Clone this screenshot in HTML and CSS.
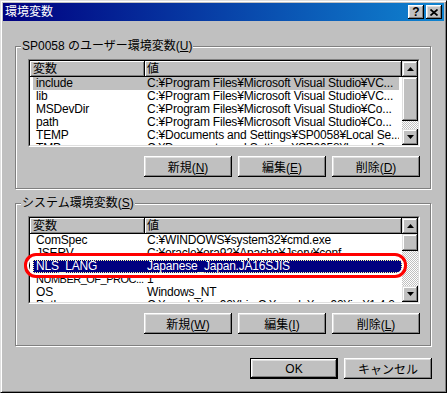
FILE: index.html
```html
<!DOCTYPE html>
<html lang="ja">
<head>
    <meta charset="UTF-8">
    <title>環境変数</title>
    <link rel="stylesheet" href="styles.css">
</head>
<body>
    <div class="window">
        <div class="titlebar">
            <span class="title">環境変数</span>
            <div class="title-buttons">
                <span class="tbtn help">?</span>
                <span class="tbtn close">
                    <svg width="8" height="7" viewBox="0 0 8 7"><path d="M0.5 0.5L7.5 6.5M7.5 0.5L0.5 6.5" stroke="#000" stroke-width="1.7"/></svg>
                </span>
            </div>
        </div>

        <div class="content">
            <!-- ユーザー環境変数 -->
            <div class="group">
                <div class="group-label">SP0058 のユーザー環境変数(<u>U</u>)</div>
                <div class="listview">
                    <div class="listview-inner">
                        <div class="list-main">
                            <div class="list-header">
                                <div class="hcell name">変数</div>
                                <div class="hcell value">値</div>
                            </div>
                            <div class="row user-row inactive">
                                <div class="cell name">include</div>
                                <div class="cell value">C:¥Program Files¥Microsoft Visual Studio¥VC...</div>
                            </div>
                            <div class="row user-row">
                                <div class="cell name">lib</div>
                                <div class="cell value">C:¥Program Files¥Microsoft Visual Studio¥VC...</div>
                            </div>
                            <div class="row user-row">
                                <div class="cell name">MSDevDir</div>
                                <div class="cell value">C:¥Program Files¥Microsoft Visual Studio¥Co...</div>
                            </div>
                            <div class="row user-row">
                                <div class="cell name">path</div>
                                <div class="cell value">C:¥Program Files¥Microsoft Visual Studio¥Co...</div>
                            </div>
                            <div class="row user-row">
                                <div class="cell name">TEMP</div>
                                <div class="cell value">C:¥Documents and Settings¥SP0058¥Local Se...</div>
                            </div>
                            <div class="row user-row">
                                <div class="cell name">TMP</div>
                                <div class="cell value">C:¥Documents and Settings¥SP0058¥Local Se...</div>
                            </div>
                        </div>
                        <div class="scrollbar">
                            <div class="sb-btn"><svg width="7" height="4" viewBox="0 0 7 4"><path d="M3.5 0L7 4H0z"/></svg></div>
                            <div class="sb-thumb" style="height:44px"></div>
                            <div class="sb-track"></div>
                            <div class="sb-btn"><svg width="7" height="4" viewBox="0 0 7 4"><path d="M0 0H7L3.5 4z"/></svg></div>
                        </div>
                    </div>
                </div>
                <div class="btn-row">
                    <button class="btn">新規(<u>N</u>)</button>
                    <button class="btn">編集(<u>E</u>)</button>
                    <button class="btn">削除(<u>D</u>)</button>
                </div>
            </div>

            <!-- システム環境変数 -->
            <div class="group system">
                <div class="group-label">システム環境変数(<u>S</u>)</div>
                <div class="listview">
                    <div class="listview-inner">
                        <div class="list-main">
                            <div class="list-header">
                                <div class="hcell name">変数</div>
                                <div class="hcell value">値</div>
                            </div>
                            <div class="row">
                                <div class="cell name">ComSpec</div>
                                <div class="cell value">C:¥WINDOWS¥system32¥cmd.exe</div>
                            </div>
                            <div class="row">
                                <div class="cell name">JSERV</div>
                                <div class="cell value">C:¥oracle¥ora92¥Apache¥Jserv¥conf</div>
                            </div>
                            <div class="row focused">
                                <div class="cell name">NLS_LANG</div>
                                <div class="cell value">Japanese_Japan.JA16SJIS</div>
                            </div>
                            <div class="row">
                                <div class="cell name narrow">NUMBER_OF_PROC...</div>
                                <div class="cell value">1</div>
                            </div>
                            <div class="row">
                                <div class="cell name">OS</div>
                                <div class="cell value">Windows_NT</div>
                            </div>
                            <div class="row">
                                <div class="cell name">Path</div>
                                <div class="cell value">C:¥oracle¥ora92¥bin;C:¥oracle¥ora92¥jre¥1.4.2...</div>
                            </div>
                        </div>
                        <div class="scrollbar">
                            <div class="sb-btn"><svg width="7" height="4" viewBox="0 0 7 4"><path d="M3.5 0L7 4H0z"/></svg></div>
                            <div class="sb-thumb" style="height:17px"></div>
                            <div class="sb-track"></div>
                            <div class="sb-btn"><svg width="7" height="4" viewBox="0 0 7 4"><path d="M0 0H7L3.5 4z"/></svg></div>
                        </div>
                    </div>
                    <!-- 赤い囲み (注釈) -->
                    <div class="annotation"></div>
                </div>
                <div class="btn-row">
                    <button class="btn">新規(<u>W</u>)</button>
                    <button class="btn">編集(<u>I</u>)</button>
                    <button class="btn">削除(<u>L</u>)</button>
                </div>
            </div>

            <div class="dialog-buttons">
                <button class="btn default">OK</button>
                <button class="btn">キャンセル</button>
            </div>
        </div>
    </div>
</body>
</html>
```

FILE: styles.css
```css
body{
    margin: 0;
    font-family: "Liberation Sans", "Noto Sans CJK JP", sans-serif;
    font-size: 12px;
    color: #000;
}
.window{
    width: 447px;
    height: 393px;
    box-sizing: border-box;
    background-color: #c0c0c0;
    border: 1px solid;
    border-color: #dfdfdf #000 #000 #dfdfdf;
    box-shadow: inset 1px 1px #fff, inset -1px -1px #808080;
    padding: 2px;
}
/* タイトルバー */
.titlebar{
    height: 18px;
    display: flex;
    align-items: center;
    justify-content: space-between;
    padding: 0 2px;
    background: linear-gradient(to right, #000080, #1084d0);
    color: #fff;
}
.title{
    line-height: 18px;
}
.title-buttons{
    display: flex;
    gap: 2px;
}
.tbtn{
    width: 16px;
    height: 14px;
    display: flex;
    align-items: center;
    justify-content: center;
    background-color: #c0c0c0;
    box-shadow: inset -1px -1px #000, inset 1px 1px #fff, inset -2px -2px #808080, inset 2px 2px #dfdfdf;
    color: #000;
}
.help{
    font-weight: bold;
    font-size: 12px;
    line-height: 14px;
}
.content{
    padding: 25px 13px 0 12px;
}
/* グループボックス */
.group{
    border: 1px solid #808080;
    box-shadow: 1px 1px 0 #fff, inset 1px 1px 0 #fff;
    padding: 0 10px 11px 12px;
}
.group.system{
    margin-top: 14px;
}
.group-label{
    display: table;
    margin: -7px 0 0 -7px;
    padding: 0 1px;
    line-height: 13px;
    background-color: #c0c0c0;
    white-space: nowrap;
}
/* リストビュー */
.listview{
    position: relative;
    margin-top: 6px;
    border: 1px solid;
    border-color: #808080 #fff #fff #808080;
}
.listview-inner{
    display: flex;
    height: 84px;
    border: 1px solid;
    border-color: #000 #dfdfdf #dfdfdf #000;
    background-color: #fff;
}
.list-main{
    flex: 1;
    overflow: hidden;
}
.list-header{
    display: flex;
    height: 16px;
}
.hcell{
    box-sizing: border-box;
    line-height: 16px;
    background-color: #c0c0c0;
    box-shadow: inset -1px -1px #000, inset 1px 1px #fff, inset -2px -2px #808080;
    white-space: nowrap;
}
.hcell.name{
    width: 115px;
    padding-left: 3px;
}
.hcell.value{
    flex: 1;
    padding-left: 2px;
}
.row{
    display: flex;
    height: 13px;
    line-height: 12px;
    margin-left: 3px;
    white-space: nowrap;
    letter-spacing: -0.2px;
}
.user-row{
    width: 366px;
}
.cell{
    box-sizing: border-box;
    overflow: hidden;
}
.cell.name{
    width: 112px;
    flex-shrink: 0;
    padding-left: 3px;
}
/* 長い変数名を列幅に収める */
.cell.narrow{
    font-size: 11px;
    letter-spacing: -0.5px;
}
.cell.value{
    flex: 1;
    padding-left: 2px;
}
/* フォーカスのない選択行 */
.row.inactive{
    background-color: #c0c0c0;
}
/* フォーカスのある選択行 */
.row.focused{
    background-color: #000080;
    color: #fff;
    outline: 1px dotted #ffff9e;
    outline-offset: -1px;
}
/* スクロールバー */
.scrollbar{
    width: 16px;
    display: flex;
    flex-direction: column;
}
.sb-btn, .sb-thumb{
    background-color: #c0c0c0;
    box-shadow: inset -1px -1px #000, inset 1px 1px #dfdfdf, inset -2px -2px #808080, inset 2px 2px #fff;
}
.sb-btn{
    height: 16px;
    display: flex;
    align-items: center;
    justify-content: center;
}
.sb-track{
    flex: 1;
    background-image: repeating-conic-gradient(#c0c0c0 0% 25%, #fff 0% 50%);
    background-size: 2px 2px;
}
/* 赤い囲み */
.annotation{
    position: absolute;
    left: -5px;
    top: 36px;
    width: 383px;
    height: 25px;
    box-sizing: border-box;
    border: 3px solid #f00;
    border-radius: 12px;
    box-shadow: inset 0 0 0 2px #fff;
}
/* ボタン */
.btn-row{
    display: flex;
    justify-content: flex-end;
    gap: 6px;
    margin-top: 9px;
}
.btn{
    width: 88px;
    height: 21px;
    box-sizing: border-box;
    border: none;
    padding: 0;
    background-color: #c0c0c0;
    box-shadow: inset -1px -1px #000, inset 1px 1px #fff, inset -2px -2px #808080, inset 2px 2px #dfdfdf;
    font-family: inherit;
    font-size: 12px;
    color: #000;
}
.btn.default{
    border: 1px solid #000;
}
.dialog-buttons{
    display: flex;
    justify-content: flex-end;
    gap: 6px;
    margin: 12px -1px 0 0;
}
```
